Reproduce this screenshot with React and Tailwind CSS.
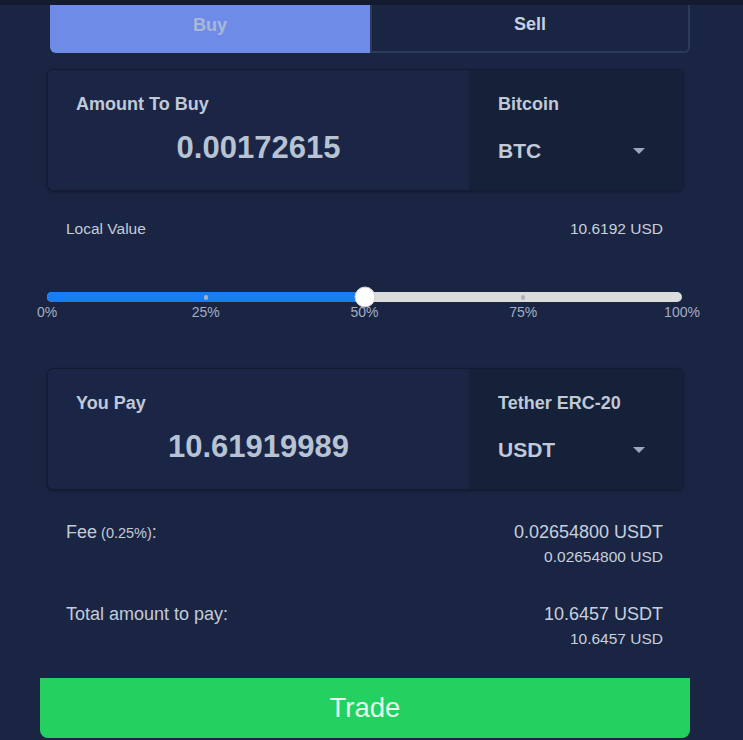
import React from 'react';

function AssetPanel({ label, value, name, symbol }) {
  return (
    <div className="ml-[47px] flex h-[122px] w-[636px] overflow-hidden rounded-[6px] border border-[#141c34] bg-[#1b2646] shadow-[0_1px_3px_rgba(0,0,0,0.35)]">
      <div className="flex flex-1 flex-col pl-[28px] pt-[24px]">
        <div className="text-[18px] font-bold leading-[21px] text-[#c0c9d8]">{label}</div>
        <div className="mt-[15px] -ml-[28px] text-center text-[31px] font-bold leading-[36px] text-[#b7c3d3]">{value}</div>
      </div>
      <div className="flex w-[213px] flex-col bg-[#152039] pl-[29px] pt-[24px]">
        <div className="text-[18px] font-bold leading-[21px] text-[#c0c9d8]">{name}</div>
        <div className="mt-[24px] flex items-center pr-[37px]">
          <span className="flex-1 text-[21px] font-bold leading-[24px] text-[#c0c9d8]">{symbol}</span>
          <span className="h-0 w-0 border-x-[6px] border-t-[6px] border-x-transparent border-t-[#9ca7ba]" />
        </div>
      </div>
    </div>
  );
}

function Slider({ pct }) {
  const marks = [0, 25, 50, 75, 100];
  return (
    <div className="ml-[47px] w-[635px]">
      <div className="relative h-[10px] rounded-full bg-[#dcdcdc]">
        <div className="absolute inset-y-0 left-0 rounded-full bg-[#1a7cf0]" style={{ width: pct + '%' }} />
        {[25, 75].map((m) => (
          <span
            key={m}
            className="absolute top-[3px] h-[5px] w-[4px] -translate-x-1/2 rounded-full bg-[#a9b1bd]"
            style={{ left: m + '%' }}
          />
        ))}
        <span
          className="absolute top-1/2 h-[21px] w-[21px] -translate-x-1/2 -translate-y-1/2 rounded-full border border-[#d0d0d0] bg-white"
          style={{ left: pct + '%' }}
        />
      </div>
      <div className="relative mt-[2px] h-[17px]">
        {marks.map((m) => (
          <span
            key={m}
            className="absolute -translate-x-1/2 text-[14px] leading-[17px] text-[#a3adc0]"
            style={{ left: m + '%' }}
          >
            {m}%
          </span>
        ))}
      </div>
    </div>
  );
}

function CostRow({ label, note, main, sub }) {
  return (
    <div className="ml-[66px] mr-[80px] flex justify-between">
      <div className="text-[18px] leading-[21px] text-[#c3cbd9]">
        {label}
        {note && <span className="text-[14.5px]"> {note}</span>}
        :
      </div>
      <div className="text-right">
        <div className="text-[18px] leading-[21px] text-[#c8d0dd]">{main}</div>
        <div className="mt-[5px] text-[15.5px] leading-[18px] text-[#c8d0dd]">{sub}</div>
      </div>
    </div>
  );
}

export default function App() {
  return (
    <div className="min-h-[740px] w-[743px] overflow-hidden bg-[#1a2544] font-['Liberation_Sans',Arial,sans-serif]">
      <div className="h-[5px] bg-[#141b30]" />
      <div className="ml-[50px] flex h-[48px] w-[640px] items-stretch">
        <button className="flex w-[320px] items-start justify-center rounded-bl-[6px] bg-[#6f8be8] pt-[10px] text-[18px] font-bold leading-[20px] text-[#a9b8d6]">
          Buy
        </button>
        <button className="flex flex-1 items-start justify-center rounded-br-[6px] border-x-2 border-b-2 border-[#2c3a5c] bg-[#1a2544] pt-[9px] text-[18px] font-bold leading-[20px] text-[#c6d0e0]">
          Sell
        </button>
      </div>

      <div className="mt-[16px]">
        <AssetPanel label="Amount To Buy" value="0.00172615" name="Bitcoin" symbol="BTC" />
      </div>

      <div className="mt-[29px] ml-[66px] mr-[80px] flex justify-between text-[15.5px] leading-[18px]">
        <span className="text-[#c3cbd9]">Local Value</span>
        <span className="text-[#c8d0dd]">10.6192 USD</span>
      </div>

      <div className="mt-[54px]">
        <Slider pct={50} />
      </div>

      <div className="mt-[47px]">
        <AssetPanel label="You Pay" value="10.61919989" name="Tether ERC-20" symbol="USDT" />
      </div>

      <div className="mt-[32px]">
        <CostRow label="Fee" note="(0.25%)" main="0.02654800 USDT" sub="0.02654800 USD" />
      </div>
      <div className="mt-[38px]">
        <CostRow label="Total amount to pay" main="10.6457 USDT" sub="10.6457 USD" />
      </div>

      <button className="mt-[30px] ml-[40px] h-[60px] w-[650px] rounded-b-[8px] bg-[#22d160] text-[27.5px] text-[#e8f6ec]">
        Trade
      </button>
    </div>
  );
}
